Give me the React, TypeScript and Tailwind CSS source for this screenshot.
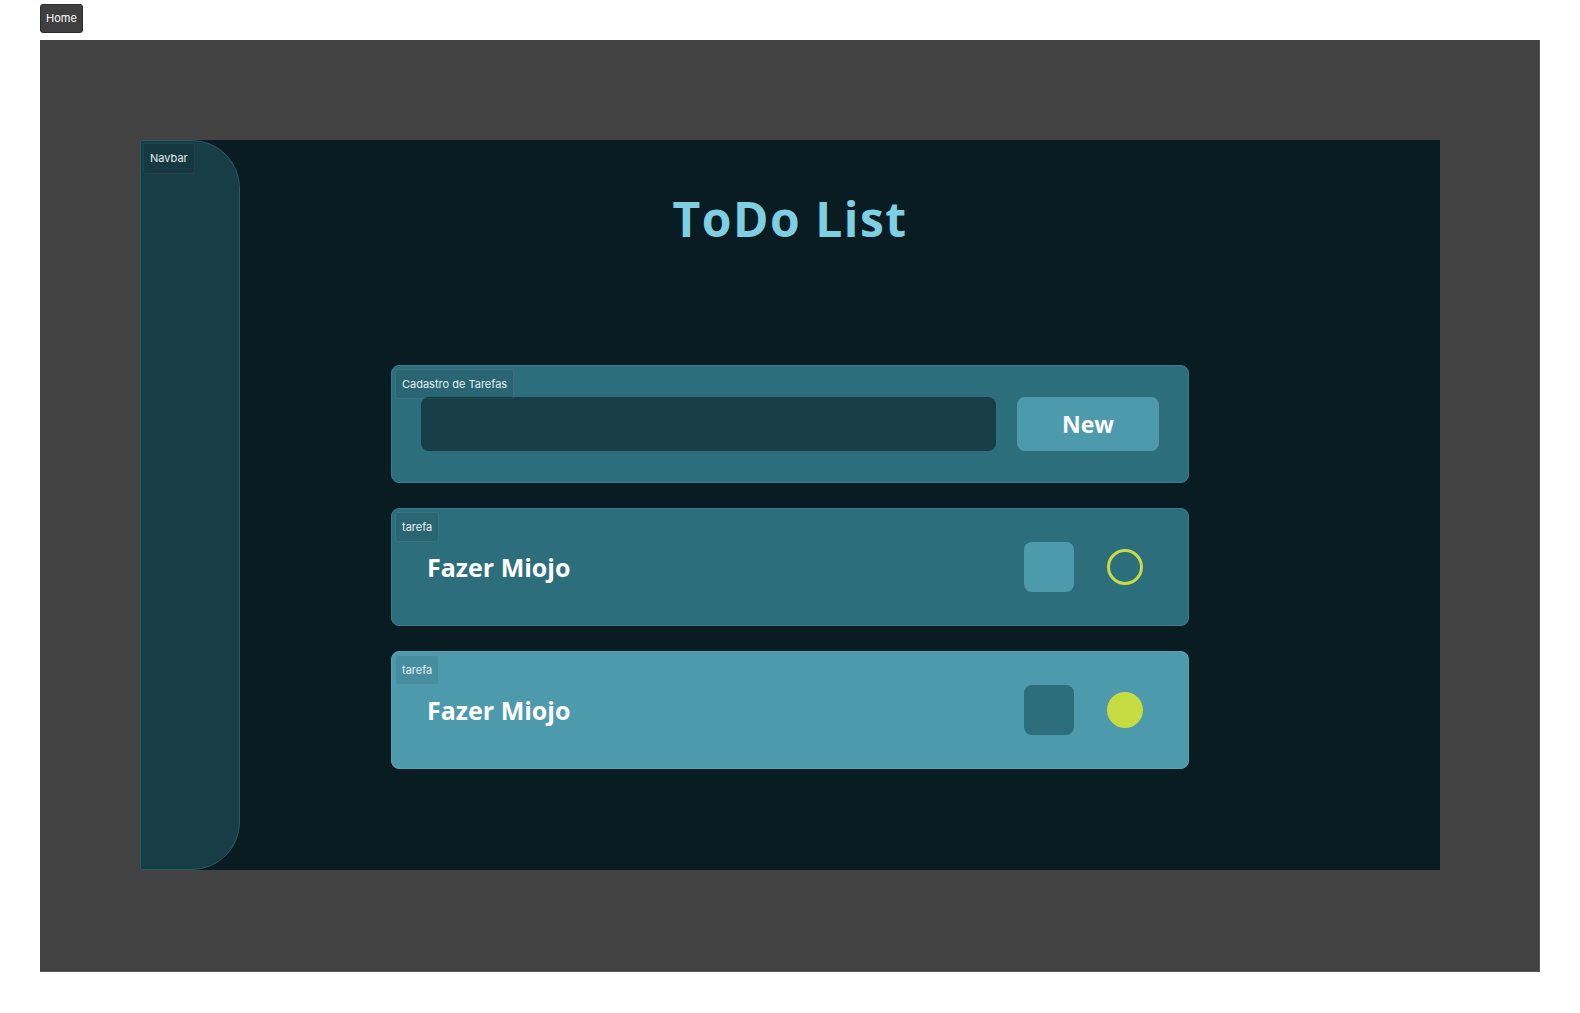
import React from "react";

const sans = { fontFamily: "'Open Sans', 'Noto Sans', sans-serif" };
const ui = { fontFamily: "Inter, 'Liberation Sans', sans-serif" };

function Tag({ text }: { text: string }) {
  return (
    <div
      style={ui}
      className="absolute left-[3px] top-[3px] h-[30px] px-[6px] flex items-center rounded-[3px] border border-[#ffffff14] bg-[#00000014] text-[11px] text-[#e8f0f2]"
    >
      {text}
    </div>
  );
}

function TaskCard({ done }: { done: boolean }) {
  return (
    <div
      className={
        done
          ? "relative h-[118px] w-[798px] rounded-[8px] border border-[#5aa3b4] bg-[#4d9aad] flex items-center pl-[35px] pr-[45px]"
          : "relative h-[118px] w-[798px] rounded-[8px] border border-[#3b7c8b] bg-[#2d6e7d] flex items-center pl-[35px] pr-[45px]"
      }
    >
      <Tag text="tarefa" />
      <div style={sans} className="flex-1 text-[25px] font-bold text-white leading-none">
        Fazer Miojo
      </div>
      <div
        className={
          done
            ? "h-[50px] w-[50px] rounded-[8px] bg-[#2d6e7d]"
            : "h-[50px] w-[50px] rounded-[8px] bg-[#4d9aad]"
        }
      />
      <div
        className={
          done
            ? "ml-[33px] h-[36px] w-[36px] rounded-full bg-[#c7dc42]"
            : "ml-[33px] h-[36px] w-[36px] rounded-full border-[3px] border-[#c7dc42]"
        }
      />
    </div>
  );
}

export default function App() {
  return (
    <div className="min-h-screen bg-white" style={ui}>
      <div className="pl-[40px] pt-[4px] h-[40px]">
        <div className="inline-flex h-[29px] w-[43px] items-center justify-center rounded-[3px] border border-[#2c2c2c] bg-[#3f3f3f] text-[11px] text-white">
          Home
        </div>
      </div>
      <div className="ml-[40px] w-[1500px] h-[932px] bg-[#424242] border-r border-b border-[#555] pt-[100px] pl-[100px]">
        <div className="flex h-[730px] w-[1300px] bg-[#081c22]">
          <div className="relative w-[100px] h-full rounded-r-[48px] border border-[#2a5966] bg-[#173d47]">
            <div className="absolute left-[2px] top-[2px] h-[31px] px-[6px] flex items-center rounded-[3px] border border-[#ffffff0d] bg-[#00000014] text-[11px] text-[#e8f0f2]">
              Navbar
            </div>
          </div>
          <div className="flex-1 pr-[100px] flex flex-col items-center">
            <h1
              style={sans}
              className="mt-[55px] text-[48px] leading-none font-bold text-[#7fcfe2] tracking-[1.5px]"
            >
              ToDo List
            </h1>
            <div className="mt-[122px] flex flex-col gap-[25px]">
              <div className="relative h-[118px] w-[798px] rounded-[8px] border border-[#3b7c8b] bg-[#2d6e7d] flex items-center pl-[29px] pr-[29px]">
                <Tag text="Cadastro de Tarefas" />
                <div className="h-[54px] flex-1 rounded-[8px] bg-[#173d47]" />
                <div
                  style={sans}
                  className="ml-[21px] h-[54px] w-[142px] rounded-[8px] bg-[#4d9aad] flex items-center justify-center text-[23px] font-bold text-white"
                >
                  New
                </div>
              </div>
              <TaskCard done={false} />
              <TaskCard done={true} />
            </div>
          </div>
        </div>
      </div>
    </div>
  );
}
